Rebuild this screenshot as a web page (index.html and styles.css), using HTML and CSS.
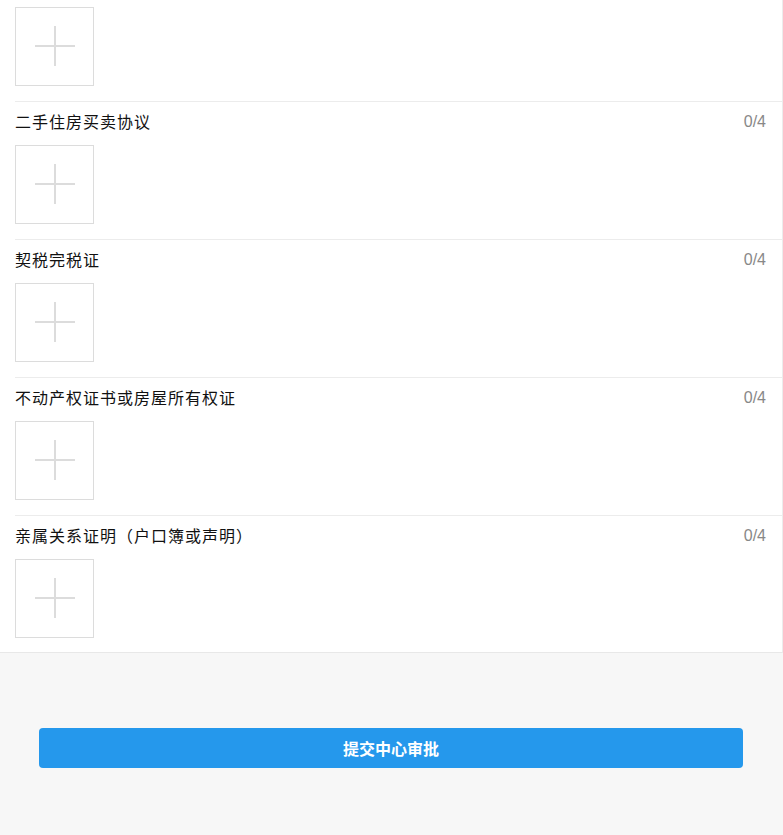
FILE: index.html
```html
<!DOCTYPE html>
<html lang="zh-CN">
<head>
<meta charset="utf-8">
<title>上传资料</title>
<link rel="stylesheet" href="styles.css">
</head>
<body>
<div class="list">
  <div class="item item-first">
    <div class="upload-box"></div>
  </div>
  <div class="item">
    <div class="item-head"><span class="item-title">二手住房买卖协议</span><span class="item-count">0/4</span></div>
    <div class="upload-box"></div>
  </div>
  <div class="item">
    <div class="item-head"><span class="item-title">契税完税证</span><span class="item-count">0/4</span></div>
    <div class="upload-box"></div>
  </div>
  <div class="item">
    <div class="item-head"><span class="item-title">不动产权证书或房屋所有权证</span><span class="item-count">0/4</span></div>
    <div class="upload-box"></div>
  </div>
  <div class="item item-last">
    <div class="item-head"><span class="item-title">亲属关系证明（户口簿或声明）</span><span class="item-count">0/4</span></div>
    <div class="upload-box"></div>
  </div>
</div>
<div class="footer">
  <button class="submit-btn" type="button">提交中心审批</button>
</div>
</body>
</html>
```
FILE: styles.css
```css
html, body {
  margin: 0;
  padding: 0;
}
body {
  background: #f7f7f7;
  font-family: "Noto Sans CJK SC", "Liberation Sans", sans-serif;
}
.list {
  background: #fff;
  border-right: 1px solid #ececec;
  border-bottom: 1px solid #e8e8e8;
}
.item {
  margin-left: 15px;
  padding-right: 16px;
  padding-bottom: 15px;
  border-top: 1px solid #ececec;
}
.item-first {
  border-top: none;
  padding-top: 7px;
}
.item-last {
  padding-bottom: 14px;
}
.item-head {
  display: flex;
  justify-content: space-between;
  align-items: center;
  height: 40px;
  margin-bottom: 3px;
}
.item-title {
  font-size: 16px;
  line-height: 1;
  padding-bottom: 3px;
  letter-spacing: 1px;
  color: #111;
}
.item-count {
  font-family: "Liberation Sans", Arial, sans-serif;
  font-size: 16px;
  color: #888;
}
.upload-box {
  position: relative;
  width: 77px;
  height: 77px;
  border: 1px solid #dcdcdc;
}
.upload-box::before,
.upload-box::after {
  content: "";
  position: absolute;
  background: #dcdcdc;
}
.upload-box::before {
  left: 19px;
  top: 37px;
  width: 40px;
  height: 2px;
}
.upload-box::after {
  left: 38px;
  top: 18px;
  width: 2px;
  height: 40px;
}
.footer {
  padding: 75px 40px 67px 39px;
}
.submit-btn {
  display: block;
  width: 100%;
  height: 40px;
  border: none;
  border-radius: 4px;
  background: #2598ec;
  color: #fff;
  font-family: "Noto Sans CJK SC", sans-serif;
  font-size: 16px;
  font-weight: bold;
  cursor: pointer;
}
```
